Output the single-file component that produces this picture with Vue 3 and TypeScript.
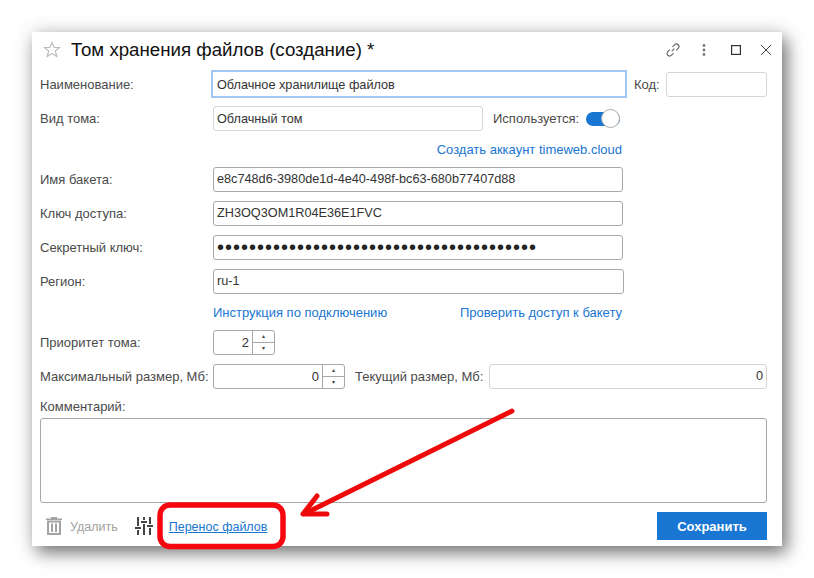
<script setup lang="ts">
const accessRows = [
  { label: 'Имя бакета:', value: 'e8c748d6-3980de1d-4e40-498f-bc63-680b77407d88' },
  { label: 'Ключ доступа:', value: 'ZH3OQ3OM1R04E36E1FVC' },
  { label: 'Секретный ключ:', value: '••••••••••••••••••••••••••••••••••••••••' },
  { label: 'Регион:', value: 'ru-1' },
];
</script>

<template>
  <div class="page">
    <div class="window">
      <header class="title-bar">
        <svg class="star" viewBox="0 0 18 18" width="18" height="18">
          <path d="M9 1.5l2.2 5h5.3l-4.2 3.5 1.5 5.5L9 12.5l-4.8 3 1.5-5.5L1.500 6.500h5.300z" fill="#fff" stroke="#bdbdbd" stroke-width="1.200" />
        </svg>
        <h1 class="title">Том хранения файлов (создание) *</h1>
        <div class="win-actions">
          <svg viewBox="0 0 16 16" width="16" height="16" fill="none" stroke="#666" stroke-width="1.100">
            <path d="M6.800 9.200l2.600-2.600M7.500 4.800l2-2a2.500 2.500 0 0 1 3.700 3.600l-2 2M8.500 11.200l-2 2a2.500 2.500 0 0 1-3.700-3.600l2-2" />
          </svg>
          <svg viewBox="0 0 4 14" width="4" height="14" fill="#777">
            <circle cx="2" cy="2.500" r="1.400" /><circle cx="2" cy="7" r="1.400" /><circle cx="2" cy="11.500" r="1.400" />
          </svg>
          <svg viewBox="0 0 10 10" width="10" height="10" fill="none" stroke="#333" stroke-width="1.200">
            <rect x=".6" y=".6" width="8.800" height="8.800" />
          </svg>
          <svg viewBox="0 0 12 12" width="12" height="12" fill="none" stroke="#444" stroke-width="1">
            <path d="M1 1l10 10M11 1L1 11" />
          </svg>
        </div>
      </header>

      <div class="row row-name">
        <label class="label">Наименование:</label>
        <div class="input focused">Облачное хранилище файлов</div>
        <label class="label code-label">Код:</label>
        <div class="input code-input"></div>
      </div>

      <div class="row row-kind">
        <label class="label">Вид тома:</label>
        <div class="input light kind-input">Облачный том</div>
        <label class="label used-label">Используется:</label>
        <span class="toggle"><span class="knob"></span></span>
      </div>

      <div class="link-row account-link">
        <a class="link">Создать аккаунт timeweb.cloud</a>
      </div>

      <div v-for="row in accessRows" :key="row.label" class="row row-access">
        <label class="label">{{ row.label }}</label>
        <div class="input dark access-input" :class="{ secret: row.label === 'Секретный ключ:', wide: row.label === 'Регион:' }">{{ row.value }}</div>
      </div>

      <div class="link-row help-links">
        <a class="link">Инструкция по подключению</a>
        <a class="link">Проверить доступ к бакету</a>
      </div>

      <div class="row row-priority">
        <label class="label">Приоритет тома:</label>
        <div class="spin priority-spin">
          <span class="spin-value">2</span>
          <span class="spin-btns"><i>▴</i><i>▾</i></span>
        </div>
      </div>

      <div class="row row-size">
        <label class="label">Максимальный размер, Мб:</label>
        <div class="spin size-spin">
          <span class="spin-value">0</span>
          <span class="spin-btns"><i>▴</i><i>▾</i></span>
        </div>
        <label class="label current-label">Текущий размер, Мб:</label>
        <div class="input current-input">0</div>
      </div>

      <div class="comment-label">Комментарий:</div>
      <div class="comment"></div>

      <footer class="footer">
        <svg class="trash" viewBox="0 0 16 18" width="16" height="18" fill="#a3a3a3">
          <path d="M5 0h6v1.500h5V3H0V1.500h5zM1 3.500h14V18H1zM3 5.500V16h10V5.500zM5 6.500h2v8.500H5zM9 6.500h2v8.500H9z" fill-rule="evenodd" />
        </svg>
        <span class="delete-text">Удалить</span>
        <svg class="sliders" viewBox="0 0 18 18" width="18" height="18" fill="#444">
          <path d="M2 0h2v9H2zM0 10h6v2H0zM2 13h2v5H2zM8 0h2v3H8zM6 4h6v2H6zM8 7h2v11H8zM14 0h2v7h-2zM12 8h6v2h-6zM14 11h2v7h-2z" />
        </svg>
        <a class="link transfer">Перенос файлов</a>
        <button class="save">Сохранить</button>
      </footer>
    </div>

    <svg class="annotation" viewBox="0 0 814 578" width="814" height="578" fill="none" stroke="#ee0a0a" stroke-linecap="round" stroke-linejoin="round">
      <rect x="160" y="505" width="123" height="41.500" rx="10" stroke="#f7060f" stroke-width="5.500" />
      <path d="M512 411L306 513" stroke-width="5" />
      <path d="M317 496L303 514L327 514" stroke-width="5" />
    </svg>
  </div>
</template>

<style scoped>
.page {
  position: relative;
  width: 814px;
  height: 578px;
  padding: 32px 32px 0;
  box-sizing: border-box;
  background: #fff;
  overflow: hidden;
  font-family: "Liberation Sans", Arial, sans-serif;
  font-size: 13px;
  color: #333;
}

.window {
  width: 750px;
  height: 514px;
  padding: 0 15px 0 8px;
  box-sizing: border-box;
  background: #fff;
  box-shadow: 5px 7px 16px rgba(0, 0, 0, 0.5), 0 0 20px rgba(0, 0, 0, 0.12);
}

.title-bar {
  display: flex;
  align-items: center;
  height: 36px;
  padding-left: 3px;
}

.star {
  flex: none;
  margin-right: 10px;
}

.title {
  flex: 1;
  margin: 0;
  font-size: 18.7px;
  font-weight: 400;
  color: #111;
}

.win-actions {
  display: flex;
  align-items: center;
  margin-right: -5px;
}

.win-actions svg:nth-child(1) { margin-right: 21px; }
.win-actions svg:nth-child(2) { margin-right: 25px; }
.win-actions svg:nth-child(3) { margin-right: 19px; }

.row {
  display: flex;
  align-items: center;
}

.label {
  flex: none;
  width: 173px;
  color: #4a4a4a;
  white-space: nowrap;
}

.input {
  flex: none;
  box-sizing: border-box;
  height: 25px;
  line-height: 23px;
  padding: 0 3px;
  border: 1px solid #d5d5d5;
  border-radius: 3px;
  background: #fff;
  color: #333;
  font-size: 12.7px;
  white-space: nowrap;
}

.dark {
  border-color: #a8a8a8;
}

.row-name {
  height: 28px;
  margin-top: 2px;
}

.focused {
  width: 416px;
  height: 28px;
  line-height: 26px;
  margin-left: -2px;
  padding-left: 4px;
  border: 2px solid #a3c8ef;
  border-radius: 0;
}

.code-label {
  width: 26px;
  margin-left: 7px;
}

.code-input {
  width: 101px;
  margin-left: 6px;
}

.row-kind {
  height: 25px;
  margin-top: 8px;
}

.kind-input {
  width: 270px;
  line-height: 24px;
}

.used-label {
  width: auto;
  margin-left: 10px;
}

.toggle {
  position: relative;
  display: block;
  width: 34px;
  height: 14px;
  margin-left: 7px;
  border-radius: 7px;
  background: #1976d2;
}

.knob {
  position: absolute;
  top: -3px;
  right: 0;
  width: 19px;
  height: 19px;
  border: 1px solid #aaa;
  border-radius: 50%;
  box-sizing: border-box;
  background: #fff;
}

.link-row {
  display: flex;
  justify-content: flex-end;
  align-items: center;
  width: 582px;
}

.account-link {
  height: 36px;
}

.link {
  color: #1976d2;
  white-space: nowrap;
}

.row-access {
  margin-bottom: 9px;
}

.access-input {
  width: 410px;
}

.wide {
  width: 411px;
}

.secret {
  font-size: 20px;
  letter-spacing: 1px;
  color: #222;
}

.help-links {
  justify-content: space-between;
  padding-left: 173px;
  box-sizing: border-box;
  height: 18px;
}

.spin {
  display: flex;
  flex: none;
  box-sizing: border-box;
  height: 25px;
  border: 1px solid #a8a8a8;
  border-radius: 3px;
  background: #fff;
}

.spin-value {
  flex: 1;
  line-height: 23px;
  text-align: right;
  padding-right: 3px;
}

.spin-btns {
  display: flex;
  flex-direction: column;
  flex: none;
  width: 21px;
  border-left: 1px solid #a8a8a8;
}

.spin-btns i {
  flex: 1;
  font-style: normal;
  font-size: 6px;
  line-height: 11px;
  text-align: center;
  color: #444;
}

.spin-btns i + i {
  border-top: 1px solid #a8a8a8;
}

.row-priority {
  margin-top: 9px;
}

.priority-spin {
  width: 62px;
}

.row-size {
  margin-top: 9px;
}

.size-spin {
  width: 132px;
}

.current-label {
  width: auto;
  margin-left: 10px;
}

.current-input {
  flex: 1;
  margin-left: 6px;
  text-align: right;
}

.comment-label {
  height: 14px;
  line-height: 14px;
  margin-top: 11px;
  color: #4a4a4a;
}

.comment {
  box-sizing: border-box;
  width: 727px;
  height: 85px;
  margin-top: 4px;
  border: 1px solid #a8a8a8;
  border-radius: 3px;
}

.footer {
  display: flex;
  align-items: center;
  height: 28px;
  margin-top: 9px;
}

.trash {
  margin-left: 6px;
}

.delete-text {
  margin-left: 8px;
  padding-top: 2px;
  font-size: 12.5px;
  color: #a0a0a0;
}

.sliders {
  margin-left: 17px;
}

.transfer {
  margin-left: 16px;
  padding-top: 2px;
  font-size: 12.5px;
  text-decoration: underline;
}

.save {
  width: 110px;
  height: 28px;
  margin-left: auto;
  border: 0;
  background: #1976d2;
  color: #fff;
  font-family: inherit;
  font-size: 13px;
  font-weight: 700;
}

.annotation {
  position: absolute;
  top: 0;
  left: 0;
  pointer-events: none;
}
</style>
